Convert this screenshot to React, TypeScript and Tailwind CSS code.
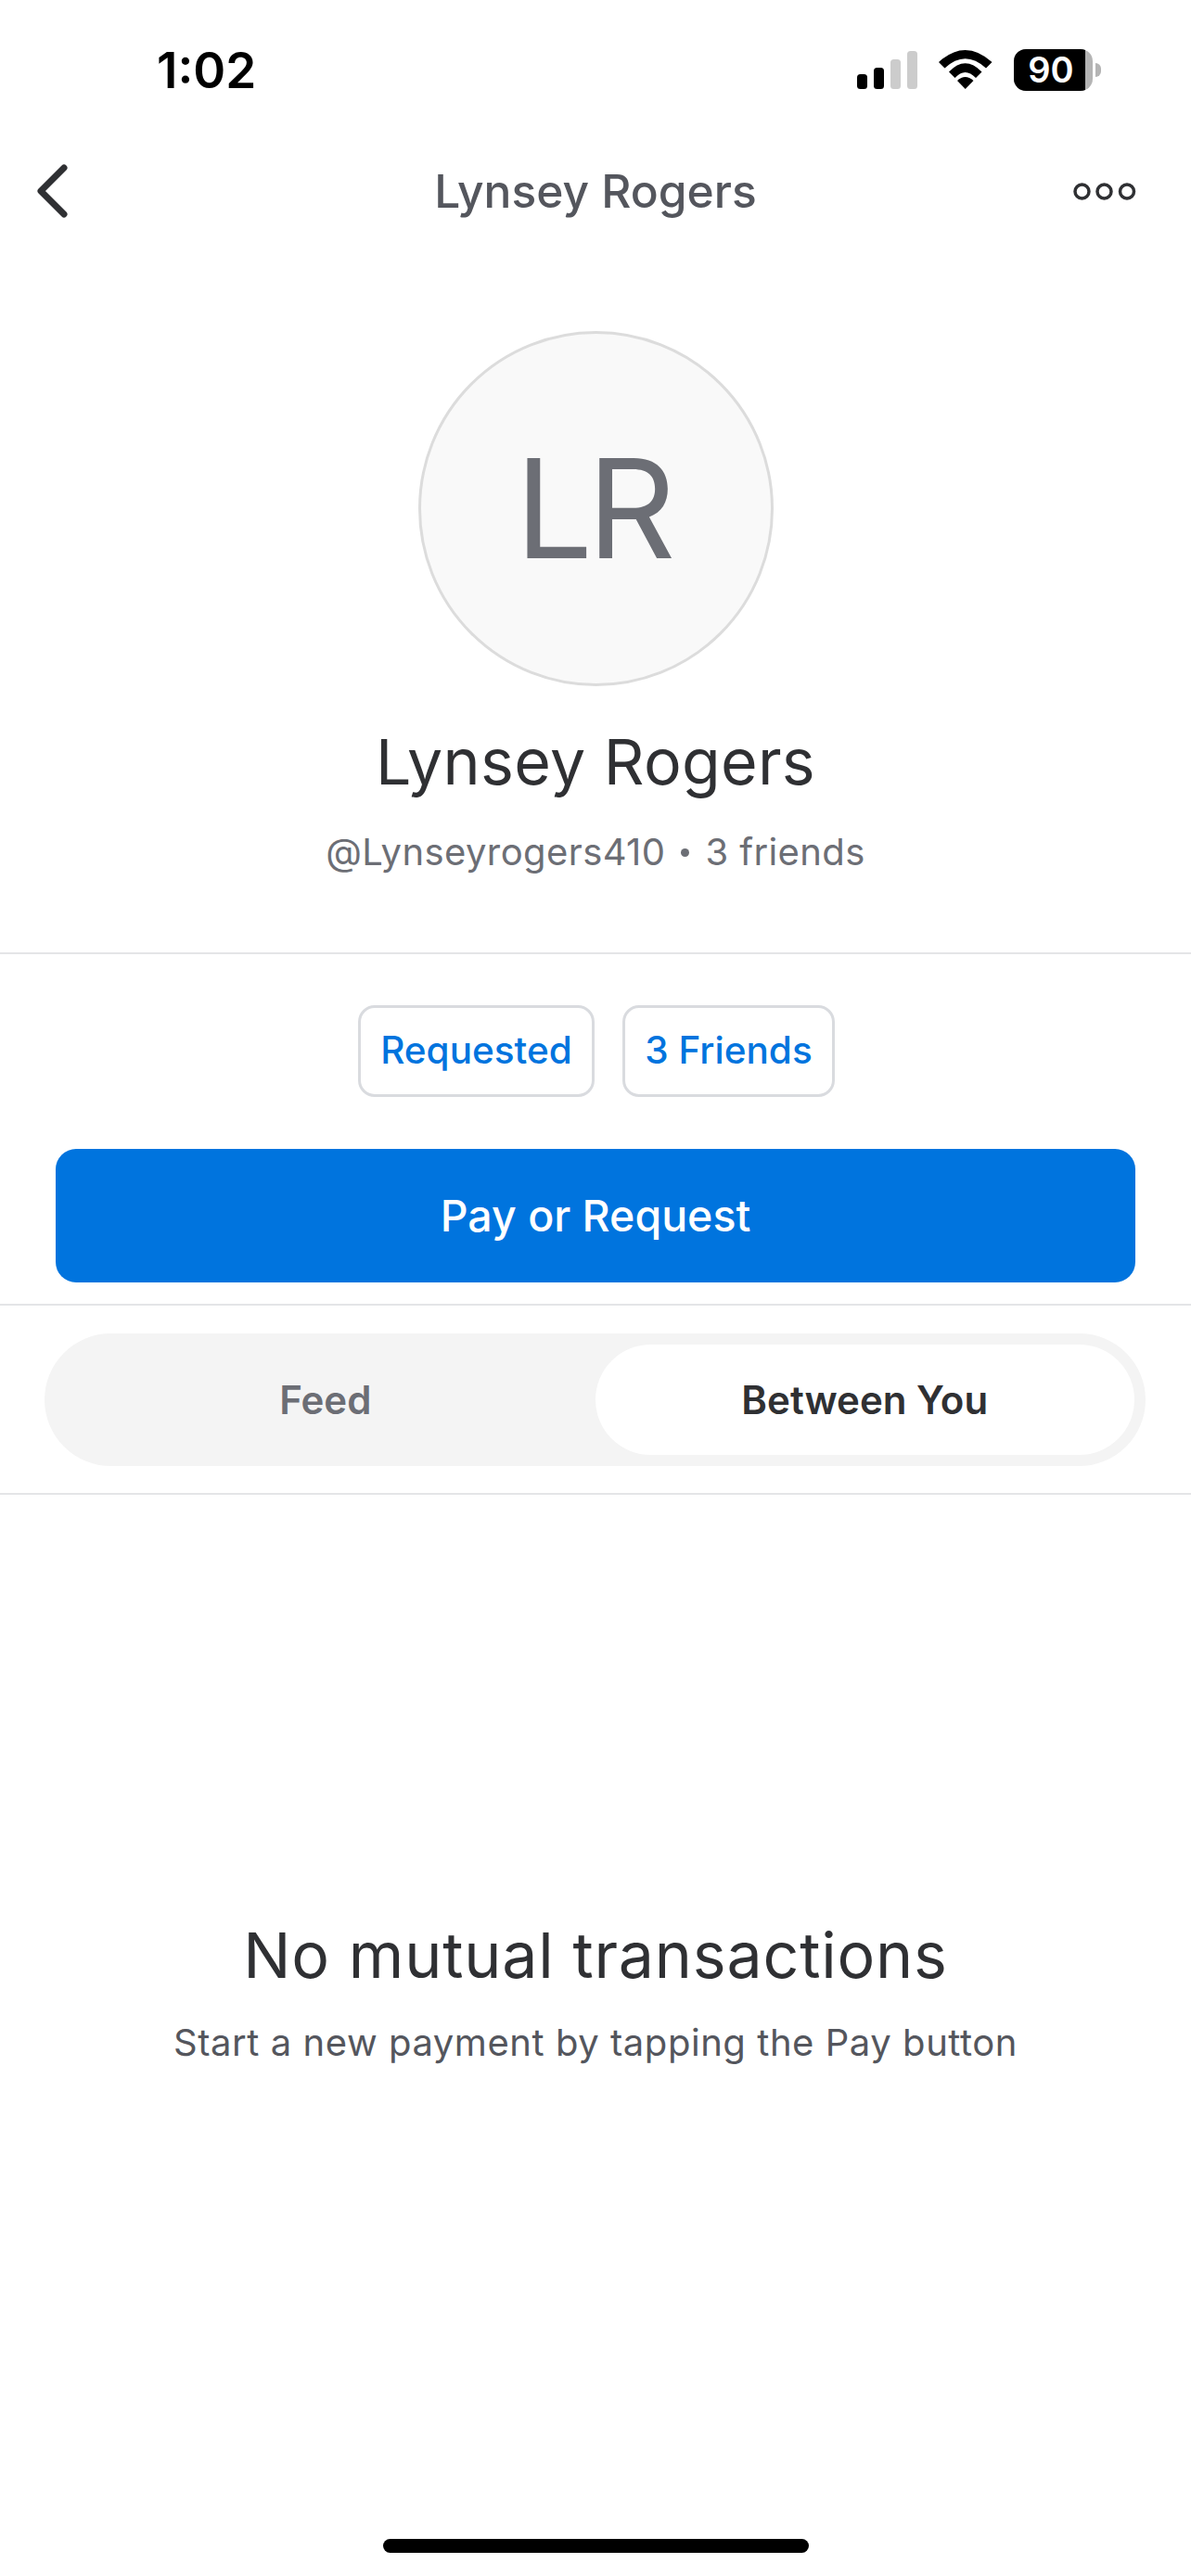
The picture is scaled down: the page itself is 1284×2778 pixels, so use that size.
const inter = { fontFamily: 'Inter, "Liberation Sans", sans-serif' };

function Signal() {
  return (
    <svg width="65" height="41" viewBox="0 0 65 41">
      <rect x="0" y="25" width="11" height="16" rx="3.5" fill="#000" />
      <rect x="18" y="18" width="11" height="23" rx="3.5" fill="#000" />
      <rect x="36" y="9" width="11" height="32" rx="3.5" fill="#cccccc" />
      <rect x="54" y="0" width="11" height="41" rx="3.5" fill="#cccccc" />
    </svg>
  );
}

function Wifi() {
  return (
    <svg width="58" height="42" viewBox="0 0 58 42">
      <path d="M0 13 Q28.5 -13 57.5 13 L51 19.5 Q28.5 -1 6.5 19.5 Z" fill="#000" />
      <path d="M11 23.5 Q28.5 5 46.5 23.5 L40 30 Q28.5 18 17.5 30 Z" fill="#000" />
      <path d="M20 33 Q28.5 25 37.5 33 L28.7 42 Z" fill="#000" />
    </svg>
  );
}

function Battery() {
  return (
    <div className="flex items-center">
      <div className="flex h-[45px] w-[85px] overflow-hidden rounded-[13px] bg-[#b4b4b4]">
        <div className="flex h-full w-[77px] items-center justify-center bg-black pl-[3px] text-[38px] font-semibold leading-none text-white">
          90
        </div>
      </div>
      <div className="ml-[3px] h-[15px] w-[6px] rounded-r-full bg-[#b4b4b4]" />
    </div>
  );
}

function Chevron() {
  return (
    <svg width="36" height="58" viewBox="0 0 36 58" fill="none">
      <path d="M30 4 L5 29 L30 54" stroke="#2f3033" strokeWidth="7" strokeLinecap="round" strokeLinejoin="round" />
    </svg>
  );
}

function Dots() {
  return (
    <svg width="68" height="19" viewBox="0 0 68 19" fill="none">
      <circle cx="9.5" cy="9.5" r="7.5" stroke="#2f3033" strokeWidth="3.5" />
      <circle cx="33.5" cy="9.5" r="7.5" stroke="#2f3033" strokeWidth="3.5" />
      <circle cx="58" cy="9.5" r="7.5" stroke="#2f3033" strokeWidth="3.5" />
    </svg>
  );
}

export default function App() {
  return (
    <div className="relative flex h-[2778px] w-[1284px] flex-col overflow-hidden bg-white" style={inter}>
      <div className="flex h-[150px] items-center justify-between pl-[169px] pr-[97px]">
        <span className="mt-[2px] text-[53px] font-semibold leading-none text-black">1:02</span>
        <div className="flex items-center gap-[23px]">
          <Signal />
          <Wifi />
          <Battery />
        </div>
      </div>

      <div className="grid h-[112px] grid-cols-[1fr_auto_1fr] items-center px-[59px]">
        <div className="-ml-[20px] flex justify-start">
          <Chevron />
        </div>
        <span className="pt-[2px] text-[49.7px] font-medium leading-none text-[#54565d]">Lynsey Rogers</span>
        <div className="flex justify-end">
          <Dots />
        </div>
      </div>

      <div className="flex h-[767px] flex-col items-center border-b-2 border-[#e4e5e7] pt-[95px]">
        <div className="flex h-[383px] w-[383px] items-center justify-center rounded-full border-[3px] border-[#dcdcdc] bg-[#f9f9f9] pr-[6px] text-[148px] font-normal leading-none tracking-[-6px] text-[#6c6e75]">
          LR
        </div>
        <div className="mt-[47px] text-[68px] font-normal leading-none tracking-[0.3px] text-[#2f3033]">Lynsey Rogers</div>
        <div className="mt-[44px] flex items-center text-[40px] leading-none tracking-[0.4px] text-[#6c6e75]">
          <span>@Lynseyrogers410</span>
          <span className="mx-[17px] h-[9px] w-[9px] rounded-full bg-[#6c6e75]" />
          <span>3 friends</span>
        </div>
      </div>

      <div className="flex h-[379px] flex-col items-center border-b-2 border-[#e4e5e7] px-[60px] pt-[55px]">
        <div className="flex gap-[30px] pl-[2px]">
          <div className="flex h-[99px] w-[255px] items-center justify-center rounded-[18px] border-[3px] border-[#d9dbdf] text-[40.5px] font-medium leading-none text-[#0074de]">
            Requested
          </div>
          <div className="flex h-[99px] w-[229px] items-center justify-center rounded-[18px] border-[3px] border-[#d9dbdf] text-[40.5px] font-medium leading-none text-[#0074de]">
            3 Friends
          </div>
        </div>
        <div className="mt-[56px] flex h-[144px] w-full items-center justify-center rounded-[22px] bg-[#0074de] text-[46.5px] font-medium leading-none text-white">
          Pay or Request
        </div>
      </div>

      <div className="flex h-[204px] items-center border-b-2 border-[#e4e5e7] pl-[48px] pr-[49px]">
        <div className="flex h-[143px] w-full items-center rounded-full bg-[#f4f4f4] p-[12px]">
          <div className="flex h-full w-1/2 items-center justify-center pt-[2px] text-[42px] font-semibold leading-none text-[#6c6e75]">
            Feed
          </div>
          <div className="flex h-full w-1/2 items-center justify-center rounded-full bg-white pt-[2px] text-[42px] font-semibold leading-none text-[#2f3033]">
            Between You
          </div>
        </div>
      </div>

      <div className="flex flex-col items-center pt-[462px]">
        <div className="text-[68px] leading-none tracking-[0.8px] text-[#2f3033]">No mutual transactions</div>
        <div className="mt-[41px] text-[40px] leading-none tracking-[0.55px] text-[#54565d]">Start a new payment by tapping the Pay button</div>
      </div>

      <div className="absolute bottom-[25px] left-[413px] h-[15px] w-[459px] rounded-full bg-black" />
    </div>
  );
}
